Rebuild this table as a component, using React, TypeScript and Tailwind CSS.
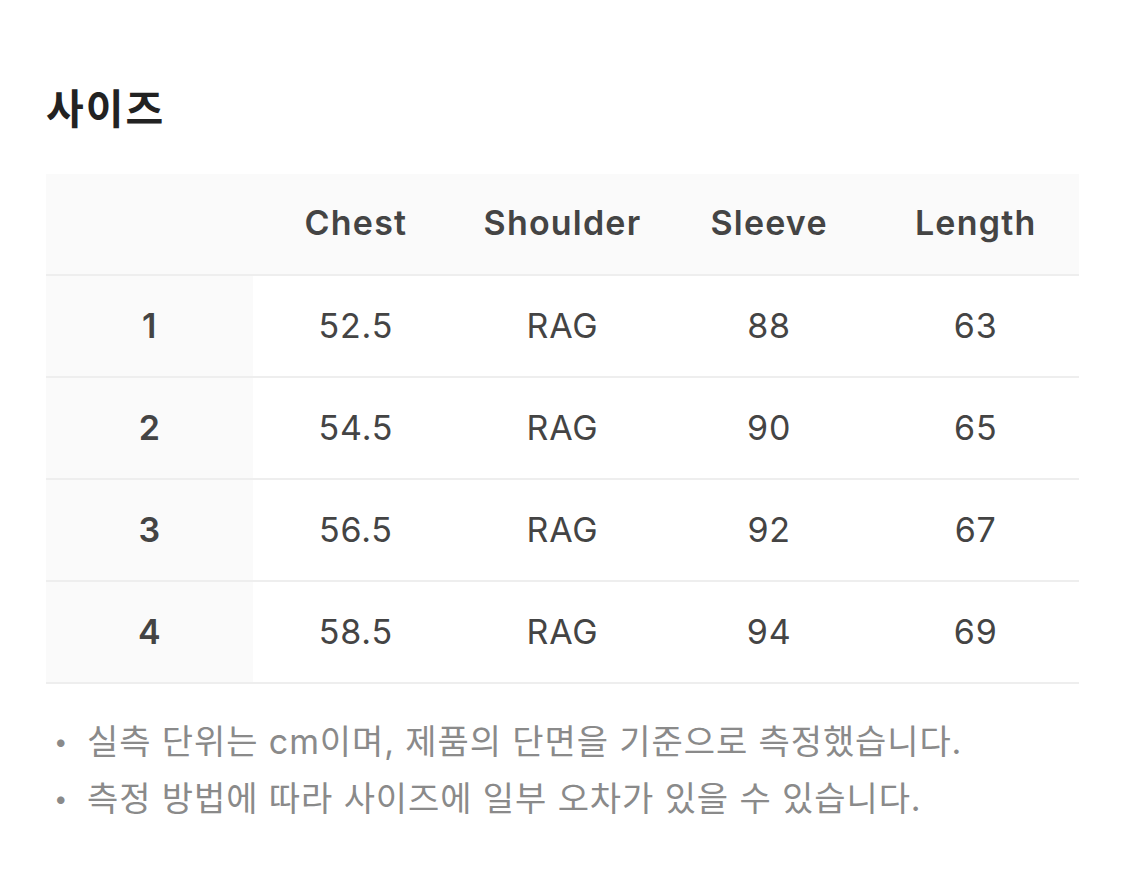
import React from 'react'

const headers = ['Chest', 'Shoulder', 'Sleeve', 'Length']

const rows = [
  { size: '1', values: ['52.5', 'RAG', '88', '63'] },
  { size: '2', values: ['54.5', 'RAG', '90', '65'] },
  { size: '3', values: ['56.5', 'RAG', '92', '67'] },
  { size: '4', values: ['58.5', 'RAG', '94', '69'] },
]

const notes = [
  '실측 단위는 cm이며, 제품의 단면을 기준으로 측정했습니다.',
  '측정 방법에 따라 사이즈에 일부 오차가 있을 수 있습니다.',
]

export default function App() {
  return (
    <div className="min-h-[879px] bg-white px-[46px] pt-[82px] font-['Inter','Noto_Sans_CJK_KR',sans-serif]">
      <h2 className="text-[41px] leading-[54px] font-bold tracking-[2px] text-[#222]">사이즈</h2>

      <div className="mt-[38px] w-[1033px]">
        {/* header */}
        <div className="grid grid-cols-5 h-[102px] bg-[#fafafa] border-b-2 border-[#eeeeee] pb-[3px]">
          <div />
          {headers.map(h => (
            <div key={h} className="flex items-center justify-center text-[34px] font-semibold tracking-[1.2px] text-[#444]">
              {h}
            </div>
          ))}
        </div>

        {rows.map(r => (
          <div key={r.size} className="grid grid-cols-5 h-[102px] border-b-2 border-[#eeeeee]">
            <div className="flex items-center justify-center bg-[#fafafa] pb-[2px] text-[34px] font-semibold text-[#444]">
              {r.size}
            </div>
            {r.values.map((v, i) => (
              <div key={i} className="flex items-center justify-center pb-[2px] text-[34px] tracking-[0.8px] text-[#444]">
                {v}
              </div>
            ))}
          </div>
        ))}
      </div>

      <ul className="mt-[29px] flex flex-col">
        {notes.map(n => (
          <li key={n} className="flex items-center h-[57px] text-[34px] text-[#8a8a8a]">
            <span className="w-[41px] pl-[8px] text-[24px]">•</span>
            <span className="tracking-[0.9px]">{n}</span>
          </li>
        ))}
      </ul>
    </div>
  )
}
